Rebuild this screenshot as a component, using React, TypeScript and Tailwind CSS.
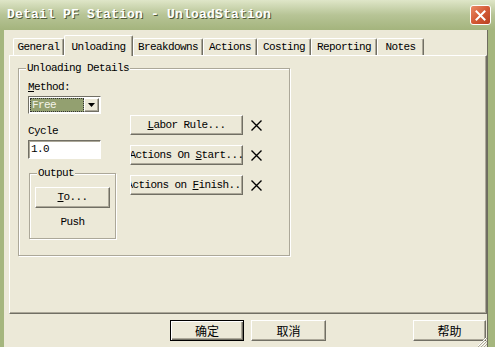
import React from 'react';

const raised =
  'bg-[#ece9d8] border border-t-white border-l-white border-r-[#716f64] border-b-[#716f64] shadow-[inset_-1px_-1px_0_#aca899]';

function Btn({ children, className = '' }: { children: React.ReactNode; className?: string }) {
  return (
    <div className={`flex items-center justify-center overflow-hidden whitespace-nowrap ${raised} ${className}`}>
      {children}
    </div>
  );
}

function Cross() {
  return (
    <svg width="13" height="13" viewBox="0 0 13 13" className="ml-[7px] shrink-0">
      <path d="M1.5 1.5 L11.5 11.5 M11.5 1.5 L1.5 11.5" stroke="#000" strokeWidth="1.4" />
    </svg>
  );
}

function Group({ label, className = '', children }: { label: string; className?: string; children?: React.ReactNode }) {
  return (
    <div className={`relative border border-[#aca899] shadow-[inset_1px_1px_0_#fff,1px_1px_0_#fff] ${className}`}>
      <span className="absolute -top-[7px] left-[7px] bg-[#ece9d8] px-[1px] leading-[12px]">{label}</span>
      {children}
    </div>
  );
}

const tabs = [
  { name: 'General', w: 'w-[51px]' },
  { name: 'Unloading', w: 'w-[69px]', active: true },
  { name: 'Breakdowns', w: 'w-[70px]' },
  { name: 'Actions', w: 'w-[54px]' },
  { name: 'Costing', w: 'w-[54px]' },
  { name: 'Reporting', w: 'w-[66px]' },
  { name: 'Notes', w: 'w-[47px]' },
];

export default function App() {
  return (
    <div className="w-[495px] h-[347px] overflow-hidden flex flex-col bg-[#a5b67e] text-black font-['Liberation_Mono',monospace] text-[11px] tracking-[-0.6px]">
      {/* title bar */}
      <div className="h-[30px] shrink-0 flex items-center pl-[7px] pr-[3px] bg-gradient-to-b from-[#dfe6c8] via-[#b7c496] to-[#a4b47d]">
        <span className="flex-1 text-white font-bold text-[13px] tracking-[0.2px] [text-shadow:1px_1px_0_#4f5a38]">
          Detail PF Station - UnloadStation
        </span>
        <div className="w-[21px] h-[20px] rounded-[3px] border border-white bg-gradient-to-br from-[#e98a66] via-[#d45a35] to-[#b8401f] flex items-center justify-center mr-[1px]">
          <svg width="11" height="11" viewBox="0 0 11 11">
            <path d="M1.5 1.5 L9.5 9.5 M9.5 1.5 L1.5 9.5" stroke="#fff" strokeWidth="2" strokeLinecap="square" />
          </svg>
        </div>
      </div>

      {/* body */}
      <div className="flex-1 flex flex-col ml-[4px] mr-[7px] bg-[#ece9d8] border-r border-r-[#6e6c5e] relative">
        {/* tabs */}
        <div className="h-[25px] shrink-0 flex items-end pl-[9px]">
          {tabs.map((t) =>
            t.active ? (
              <div
                key={t.name}
                className={`${t.w} h-[21px] -mb-[1px] relative z-10 bg-[#ece9d8] flex justify-center pt-[3px] border-t border-l border-r border-t-white border-l-white border-r-[#716f64] rounded-t-[2px] shadow-[inset_-1px_0_0_#aca899]`}
              >
                {t.name}
              </div>
            ) : (
              <div
                key={t.name}
                className={`${t.w} h-[17px] flex items-center justify-center border-t border-l border-r border-t-white border-l-white border-r-[#716f64] rounded-t-[2px] shadow-[inset_-1px_0_0_#aca899]`}
              >
                {t.name}
              </div>
            )
          )}
        </div>

        {/* panel */}
        <div className="ml-[5px] w-[478px] h-[259px] shrink-0 border border-t-white border-l-white border-r-[#716f64] border-b-[#716f64] shadow-[inset_-1px_-1px_0_#aca899] pt-[12px] pl-[8px]">
          <Group label="Unloading Details" className="w-[272px] h-[188px]">
            <div className="flex pt-[12px] pl-[9px]">
              {/* left column */}
              <div className="w-[92px] flex flex-col">
                <div className="leading-[12px]">
                  <u className="underline-offset-1">M</u>ethod:
                </div>
                <div className="mt-[3px] w-[73px] h-[18px] flex border border-t-[#716f64] border-l-[#716f64] border-r-white border-b-white bg-white p-[1px]">
                  <div className="flex-1 bg-[#93a070] text-[#f4f4e8] flex items-center pl-[2px] outline outline-1 outline-dotted outline-[#333] -outline-offset-1">
                    Free
                  </div>
                  <div className={`w-[15px] flex items-center justify-center ${raised}`}>
                    <svg width="7" height="4" viewBox="0 0 7 4">
                      <path d="M0 0 H7 L3.5 4 Z" fill="#000" />
                    </svg>
                  </div>
                </div>
                <div className="mt-[11px] leading-[12px]">Cycle</div>
                <div className="mt-[3px] w-[73px] h-[19px] flex items-center pl-[2px] bg-white border border-t-[#716f64] border-l-[#716f64] border-r-white border-b-white shadow-[inset_1px_1px_0_#aca899]">
                  1.0
                </div>
                <Group label="Output" className="mt-[14px] ml-[1px] w-[87px] h-[66px]">
                  <div className="flex flex-col items-center pt-[13px]">
                    <Btn className="w-[75px] h-[21px]">
                      <u className="underline-offset-1">T</u>o...
                    </Btn>
                    <div className="mt-[8px] leading-[12px]">Push</div>
                  </div>
                </Group>
              </div>

              {/* right column */}
              <div className="ml-[10px] mt-[34px] flex flex-col gap-[10px]">
                <div className="flex items-center">
                  <Btn className="w-[113px] h-[20px]">
                    <span>
                      <u className="underline-offset-1">L</u>abor Rule...
                    </span>
                  </Btn>
                  <Cross />
                </div>
                <div className="flex items-center">
                  <Btn className="w-[113px] h-[20px]">
                    <span>
                      Actions On <u className="underline-offset-1">S</u>tart...
                    </span>
                  </Btn>
                  <Cross />
                </div>
                <div className="flex items-center">
                  <Btn className="w-[113px] h-[20px]">
                    <span>
                      Actions on <u className="underline-offset-1">F</u>inish...
                    </span>
                  </Btn>
                  <Cross />
                </div>
              </div>
            </div>
          </Group>
        </div>

        {/* bottom buttons */}
        <div className="mt-[6px] flex font-['Noto_Sans_CJK_SC',sans-serif] text-[12px] tracking-normal pl-[166px]">
          <div className="w-[74px] h-[21px] flex items-center justify-center border border-black bg-[#ece9d8] shadow-[inset_1px_1px_0_#fff,inset_-1px_-1px_0_#716f64,inset_-2px_-2px_0_#aca899]">
            确定
          </div>
          <Btn className="ml-[7px] w-[75px] h-[21px]">取消</Btn>
          <Btn className="ml-[87px] w-[73px] h-[21px]">帮助</Btn>
        </div>

        <svg width="11" height="11" viewBox="0 0 11 11" className="absolute right-0 bottom-0">
          <path d="M10 2 L2 10 M10 5 L5 10 M10 8 L8 10" stroke="#fff" strokeWidth="1" />
          <path d="M11 2 L2 11 M11 5 L5 11 M11 8 L8 11" stroke="#aca899" strokeWidth="1" />
        </svg>
      </div>
    </div>
  );
}
